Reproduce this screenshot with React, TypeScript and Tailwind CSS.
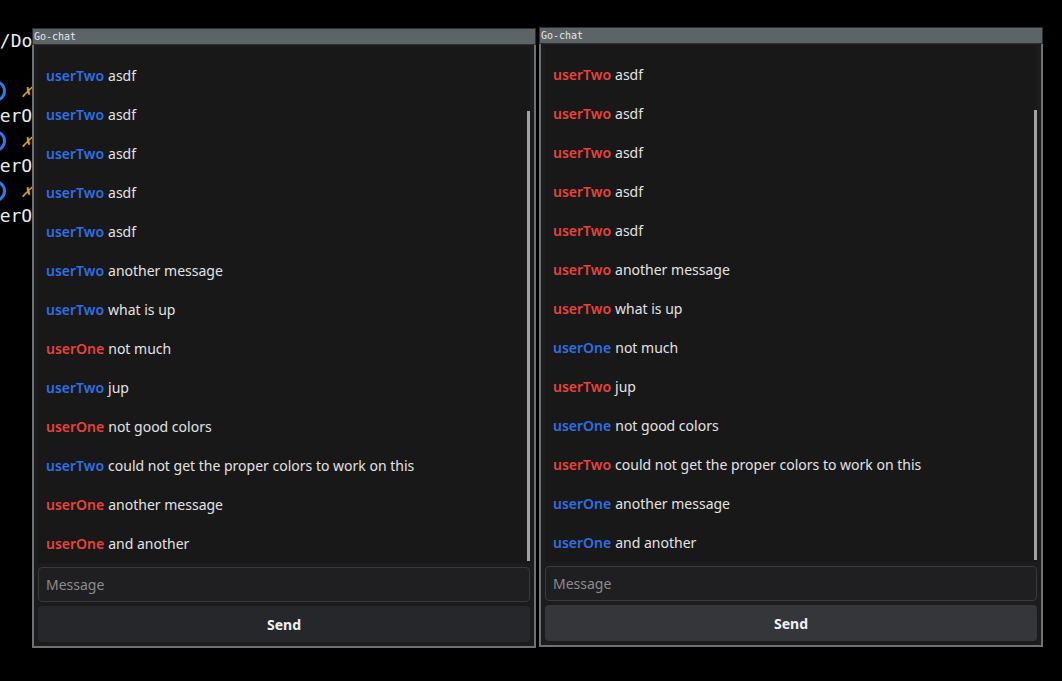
import React from "react";

type Msg = { user: "userOne" | "userTwo"; text: string };

const messages: Msg[] = [
  { user: "userTwo", text: "asdf" },
  { user: "userTwo", text: "asdf" },
  { user: "userTwo", text: "asdf" },
  { user: "userTwo", text: "asdf" },
  { user: "userTwo", text: "asdf" },
  { user: "userTwo", text: "another message" },
  { user: "userTwo", text: "what is up" },
  { user: "userOne", text: "not much" },
  { user: "userTwo", text: "jup" },
  { user: "userOne", text: "not good colors" },
  { user: "userTwo", text: "could not get the proper colors to work on this" },
  { user: "userOne", text: "another message" },
  { user: "userOne", text: "and another" },
];

function ChatWindow({ self, hover }: { self: "userOne" | "userTwo"; hover?: boolean }) {
  return (
    <div className="flex flex-col w-[504px] h-[620px]">
      <div className="h-[17px] bg-[#5d6468] border border-[#2c3032] flex items-center pl-[1px]">
        <span className="text-[10px] leading-none text-[#e4e6e7] font-['DejaVu_Sans_Mono',monospace]">Go-chat</span>
      </div>
      <div className="flex-1 flex flex-col border-x-2 border-b-2 border-[#6c7175] bg-[#1c1c1d] px-[4px] pt-[2px] pb-[4px] gap-[4px]">
        <div className="relative flex-1 bg-[#181818] pt-[9px] pl-[8px]">
          {messages.map((m, i) => (
            <div key={i} className="h-[39px] flex items-center text-[14px] font-['Noto_Sans',sans-serif]">
              <span className={`font-semibold ${m.user === self ? "text-[#e8433b]" : "text-[#2f6fe4]"}`}>{m.user}</span>
              <span className="ml-[4px] text-[#e3e3e3]">{m.text}</span>
            </div>
          ))}
          <div className="absolute right-[0px] top-[64px] w-[3px] h-[450px] bg-[#a3a3a3]" />
        </div>
        <div className="h-[35px] rounded-[4px] border border-[#39393b] bg-[#1f1f21] flex items-center px-[7px] text-[14px] text-[#8c8c8e] font-['Noto_Sans',sans-serif]">
          Message
        </div>
        <div
          className={`h-[36px] rounded-[4px] flex items-center justify-center text-[14px] font-bold text-[#f0f0f0] font-['Noto_Sans',sans-serif] ${
            hover ? "bg-[#35363a]" : "bg-[#26272b]"
          }`}
        >
          Send
        </div>
      </div>
    </div>
  );
}

function PromptLine() {
  return (
    <div className="h-[25px] flex items-center whitespace-nowrap">
      <span className="shrink-0 ml-[-16px] w-[22px] h-[22px] rounded-full border-[3px] border-[#2f7ce6]" />
      <span className="ml-[15px] italic text-[#e0a21a] leading-[25px]">✗</span>
    </div>
  );
}

function UserLine() {
  return <div className="h-[25px] leading-[25px] whitespace-nowrap ml-[-22px]">userOne</div>;
}

export default function App() {
  return (
    <div className="relative w-[1062px] h-[681px] bg-black overflow-hidden">
      <div className="absolute left-0 top-[28px] w-[32px] overflow-hidden flex flex-col text-[18px] text-[#ececec] font-['DejaVu_Sans_Mono',monospace]">
        <div className="h-[25px] leading-[25px] whitespace-nowrap ml-[-11px]">~/Documents</div>
        <div className="h-[25px]" />
        <PromptLine />
        <UserLine />
        <PromptLine />
        <UserLine />
        <PromptLine />
        <UserLine />
      </div>
      <div className="absolute left-[32px] top-[28px]">
        <ChatWindow self="userOne" />
      </div>
      <div className="absolute left-[539px] top-[27px]">
        <ChatWindow self="userTwo" hover />
      </div>
    </div>
  );
}
